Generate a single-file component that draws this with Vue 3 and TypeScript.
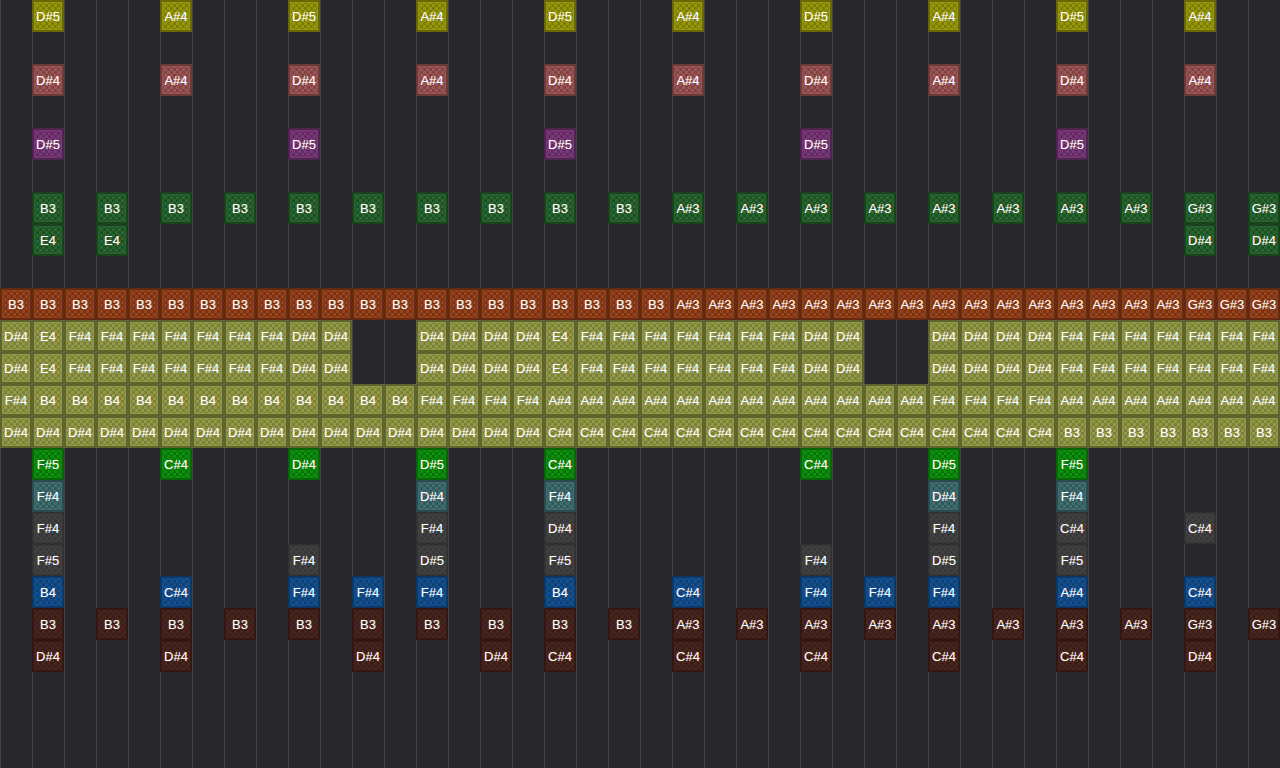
<script setup lang="ts">
type Row = { tone: string; notes: Record<number, string> }

const COLS = 40

// expands "1,5,9:D#5" style groups into a column -> note map
function at(groups: [string, number[]][]): Record<number, string> {
  const out: Record<number, string> = {}
  for (const [note, cols] of groups) cols.forEach((c) => (out[c] = note))
  return out
}

function span(from: number, to: number, step = 1): number[] {
  const out: number[] = []
  for (let c = from; c <= to; c += step) out.push(c)
  return out
}

const padRows = at([
  ['D#4', [0, 9, 10, ...span(13, 16), 25, 26, ...span(29, 32)]],
  ['E4', [1, 17]],
  ['F#4', [...span(2, 8), ...span(18, 24), ...span(33, 39)]],
])

const bassGroups: [string, number[]][] = [
  ['B3', span(1, 19, 2)],
  ['A#3', span(21, 35, 2)],
  ['G#3', [37, 39]],
]

const rows: (Row | null)[] = [
  { tone: 'olive', notes: at([['D#5', [1, 9, 17, 25, 33]], ['A#4', [5, 13, 21, 29, 37]]]) },
  null,
  { tone: 'rose', notes: at([['D#4', [1, 9, 17, 25, 33]], ['A#4', [5, 13, 21, 29, 37]]]) },
  null,
  { tone: 'plum', notes: at([['D#5', [1, 9, 17, 25, 33]]]) },
  null,
  { tone: 'forest', notes: at(bassGroups) },
  { tone: 'forest', notes: at([['E4', [1, 3]], ['D#4', [37, 39]]]) },
  null,
  { tone: 'rust', notes: at([['B3', span(0, 20)], ['A#3', span(21, 36)], ['G#3', [37, 38, 39]]]) },
  { tone: 'moss', notes: padRows },
  { tone: 'moss', notes: padRows },
  { tone: 'moss', notes: at([['F#4', [0, ...span(13, 16), ...span(29, 32)]], ['B4', span(1, 12)], ['A#4', [...span(17, 28), ...span(33, 39)]]]) },
  { tone: 'moss', notes: at([['D#4', span(0, 16)], ['C#4', span(17, 32)], ['B3', span(33, 39)]]) },
  { tone: 'green', notes: at([['F#5', [1, 33]], ['C#4', [5, 17, 25]], ['D#4', [9]], ['D#5', [13, 29]]]) },
  { tone: 'teal', notes: at([['F#4', [1, 17, 33]], ['D#4', [13, 29]]]) },
  { tone: 'gray', notes: at([['F#4', [1, 13, 29]], ['D#4', [17]], ['C#4', [33, 37]]]) },
  { tone: 'gray', notes: at([['F#5', [1, 17, 33]], ['F#4', [9, 25]], ['D#5', [13, 29]]]) },
  { tone: 'blue', notes: at([['B4', [1, 17]], ['C#4', [5, 21, 37]], ['F#4', [9, 11, 13, 25, 27, 29]], ['A#4', [33]]]) },
  { tone: 'brown', notes: at(bassGroups) },
  { tone: 'brown', notes: at([['D#4', [1, 5, 11, 15, 37]], ['C#4', [17, 21, 25, 29, 33]]]) },
]

const columns = span(0, COLS - 1)
</script>

<template>
  <div class="roll">
    <div v-for="(row, r) in rows" :key="r" class="lane">
      <template v-if="row">
        <div v-for="c in columns" :key="c" class="slot">
          <div v-if="row.notes[c]" class="note" :class="row.tone">{{ row.notes[c] }}</div>
        </div>
      </template>
    </div>
  </div>
</template>

<style>
html,
body {
  margin: 0;
  overflow: hidden;
}
</style>

<style scoped>
.roll {
  width: 1280px;
  height: 768px;
  overflow: hidden;
  background-color: #28282a;
  background-image: linear-gradient(90deg, #434345 1px, transparent 1px);
  background-size: 32px 32px;
  font-family: 'Liberation Sans', Arial, sans-serif;
}

.lane {
  display: flex;
  height: 32px;
}

.slot {
  width: 32px;
  height: 32px;
  flex: none;
}

.note {
  box-sizing: border-box;
  width: 32px;
  height: 32px;
  border: 2px solid var(--edge);
  background-color: var(--base);
  background-image: repeating-conic-gradient(var(--dark) 0 25%, transparent 0 50%);
  background-size: 6px 6px;
  background-position: 2px 2px;
  box-shadow: inset 0 0 1px 1px var(--base);
  color: #fff;
  font-size: 13px;
  line-height: 30px;
  text-align: center;
  text-shadow: 0 0 1px rgba(255, 255, 255, 0.3);
}

.olive { --base: #989810; --dark: #7c7c02; --edge: #686806; }
.rose { --base: #9c5656; --dark: #804242; --edge: #6a3939; }
.plum { --base: #7a387a; --dark: #622b62; --edge: #4e254e; }
.forest { --base: #2a6630; --dark: #1f4f25; --edge: #1a411e; }
.rust { --base: #94431e; --dark: #7a3212; --edge: #622913; }
.moss { --base: #949948; --dark: #7b803b; --edge: #5e6430; }
.green { --base: #0e900e; --dark: #077607; --edge: #0a620a; }
.teal { --base: #406e72; --dark: #32585c; --edge: #2b4a4e; }
.gray { --base: #424242; --dark: #363636; --edge: #323232; }
.blue { --base: #145192; --dark: #0e4074; --edge: #0e3762; }
.brown { --base: #49261e; --dark: #3b1d17; --edge: #311814; }
</style>
